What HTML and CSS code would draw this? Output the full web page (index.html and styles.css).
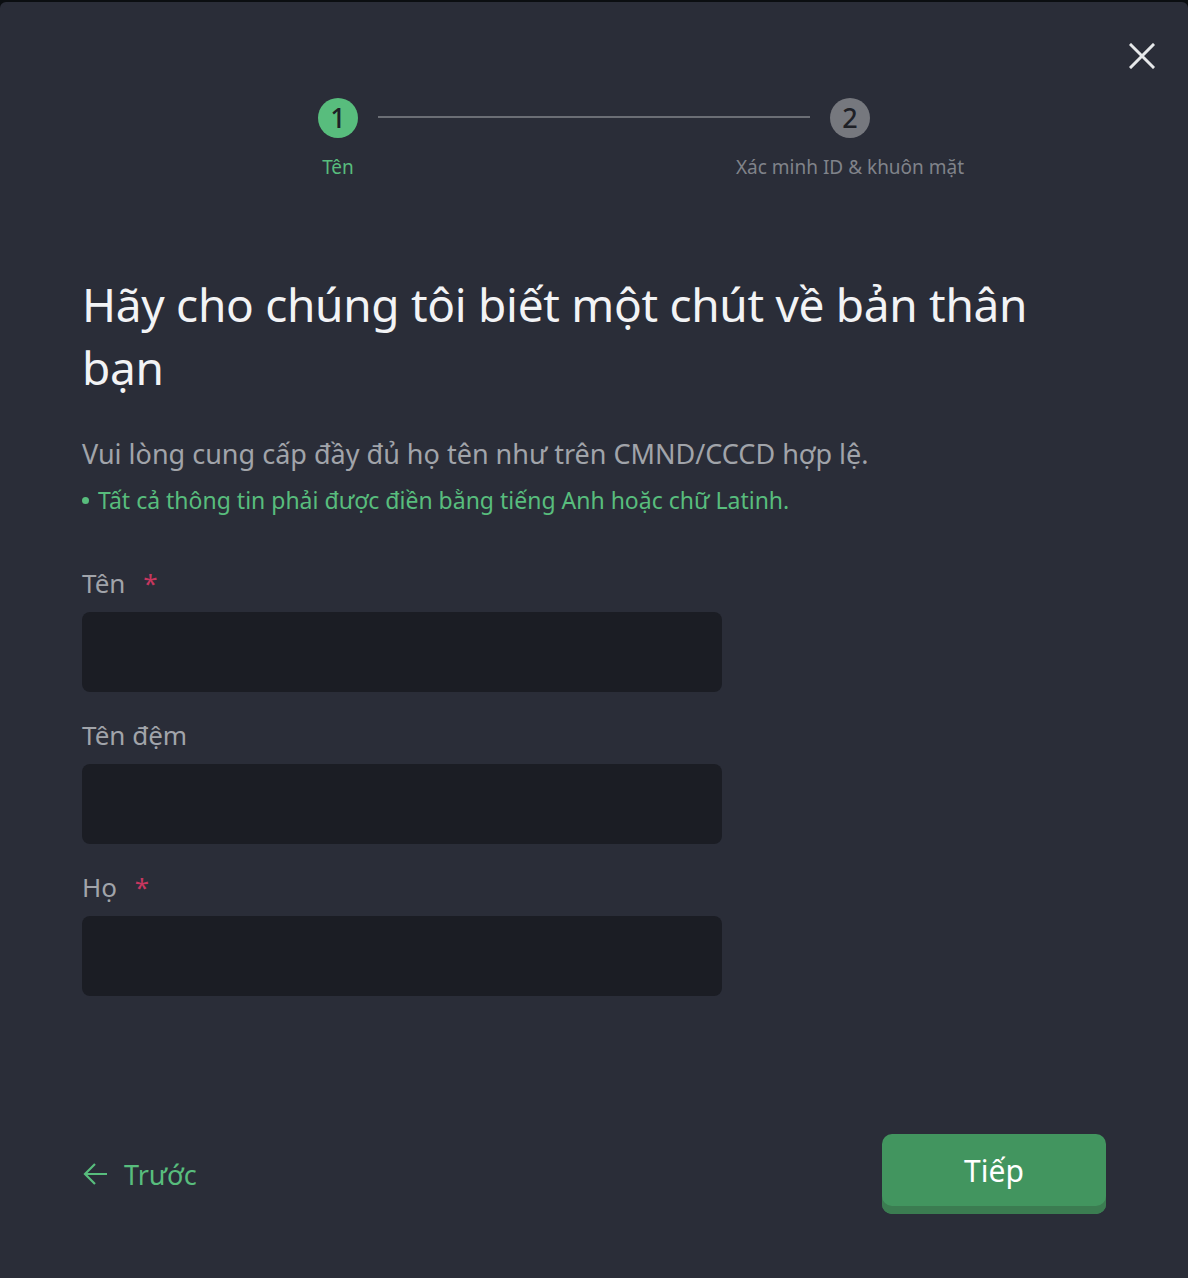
FILE: index.html
```html
<!DOCTYPE html>
<html lang="vi">
<head>
    <meta charset="UTF-8">
    <meta name="viewport" content="width=device-width, initial-scale=1.0">
    <title>Xác minh danh tính</title>
    <link rel="stylesheet" href="styles.css">
</head>
<body>

    <div class="modal">
        <button class="close-btn" aria-label="Đóng">
            <svg width="26" height="26" viewBox="0 0 26 26"><path d="M2 2 L24 24 M24 2 L2 24" stroke="#e6e8ea" stroke-width="3" stroke-linecap="square"/></svg>
        </button>

        <div class="steps">
            <div class="step active">
                <div class="step-dot">1</div>
                <div class="step-label">Tên</div>
            </div>
            <div class="step-line"></div>
            <div class="step">
                <div class="step-dot">2</div>
                <div class="step-label">Xác minh ID &amp; khuôn mặt</div>
            </div>
        </div>

        <h1 class="title">Hãy cho chúng tôi biết một chút về bản thân bạn</h1>
        <p class="desc">Vui lòng cung cấp đầy đủ họ tên như trên CMND/CCCD hợp lệ.</p>
        <p class="note"><span class="dot"></span>Tất cả thông tin phải được điền bằng tiếng Anh hoặc chữ Latinh.</p>

        <form class="form">
            <label class="field">
                <span class="field-label">Tên <span class="req">*</span></span>
                <input class="field-input" type="text">
            </label>
            <label class="field">
                <span class="field-label">Tên đệm</span>
                <input class="field-input" type="text">
            </label>
            <label class="field">
                <span class="field-label">Họ <span class="req">*</span></span>
                <input class="field-input" type="text">
            </label>
        </form>

        <div class="footer">
            <a class="back" href="#">
                <svg width="28" height="28" viewBox="0 0 28 28"><path d="M25 14 H4 M13 4 L3 14 L13 24" fill="none" stroke="#58bd7d" stroke-width="2.2"/></svg>
                Trước
            </a>
            <button class="next-btn" type="button">Tiếp</button>
        </div>
    </div>

</body>
</html>
```

FILE: styles.css
```css
body {
    margin: 0;
    background-color: #0b0e11;
    font-family: "Noto Sans", "Open Sans", "Liberation Sans", sans-serif;
}
.modal {
    position: relative;
    margin-top: 2px;
    height: 1276px;
    box-sizing: border-box;
    background-color: #2a2d38;
    border-radius: 6px 6px 0 0;
    padding: 96px 82px 0;
}
.close-btn {
    position: absolute;
    top: 41px;
    right: 33px;
    background: none;
    border: none;
    padding: 0;
    cursor: pointer;
}
.steps {
    display: flex;
    align-items: flex-start;
    margin-left: 236px;
}
.step {
    display: flex;
    flex-direction: column;
    align-items: center;
    width: 40px;
}
.step-dot {
    width: 40px;
    height: 40px;
    border-radius: 50%;
    background-color: #76787e;
    color: #1e2026;
    font-size: 27px;
    font-weight: 500;
    line-height: 40px;
    text-align: center;
}
.step.active .step-dot {
    background-color: #58bd7d;
}
.step-label {
    margin-top: 16px;
    font-size: 19px;
    color: #80838a;
    white-space: nowrap;
}
.step.active .step-label {
    color: #58bd7d;
}
.step-line {
    flex: none;
    width: 432px;
    height: 2px;
    margin: 18px 20px 0;
    background-color: #6b6e75;
}
.title {
    margin: 93px 0 0;
    font-size: 46px;
    font-weight: 400;
    letter-spacing: -0.3px;
    line-height: 63px;
    color: #f2f3f5;
    max-width: 990px;
}
.desc {
    margin: 36px 0 0;
    font-size: 27px;
    color: #a1a4aa;
}
.note {
    margin: 12px 0 0;
    font-size: 23px;
    color: #58bd7d;
    display: flex;
    align-items: center;
}
.dot {
    width: 7px;
    height: 7px;
    border-radius: 50%;
    background-color: #58bd7d;
    margin-right: 9px;
}
.form {
    margin-top: 52px;
    width: 640px;
    display: flex;
    flex-direction: column;
    gap: 28px;
}
.field {
    display: flex;
    flex-direction: column;
}
.field-label {
    font-size: 26px;
    color: #a1a4aa;
    line-height: 30px;
    margin-bottom: 14px;
}
.req {
    color: #c7375f;
    margin-left: 11px;
}
.field-input {
    box-sizing: border-box;
    height: 80px;
    border: none;
    border-radius: 8px;
    background-color: #1b1d24;
    outline: none;
}
.footer {
    display: flex;
    justify-content: space-between;
    align-items: center;
    margin-top: 138px;
}
.back {
    display: flex;
    align-items: center;
    gap: 14px;
    color: #58bd7d;
    font-size: 27px;
    text-decoration: none;
}
.next-btn {
    width: 224px;
    height: 80px;
    border: none;
    border-radius: 10px;
    background-color: #42955f;
    box-shadow: inset 0 -8px 0 #3b7c51;
    color: #fff;
    font-family: inherit;
    font-size: 30px;
    padding-bottom: 8px;
    cursor: pointer;
}
```
